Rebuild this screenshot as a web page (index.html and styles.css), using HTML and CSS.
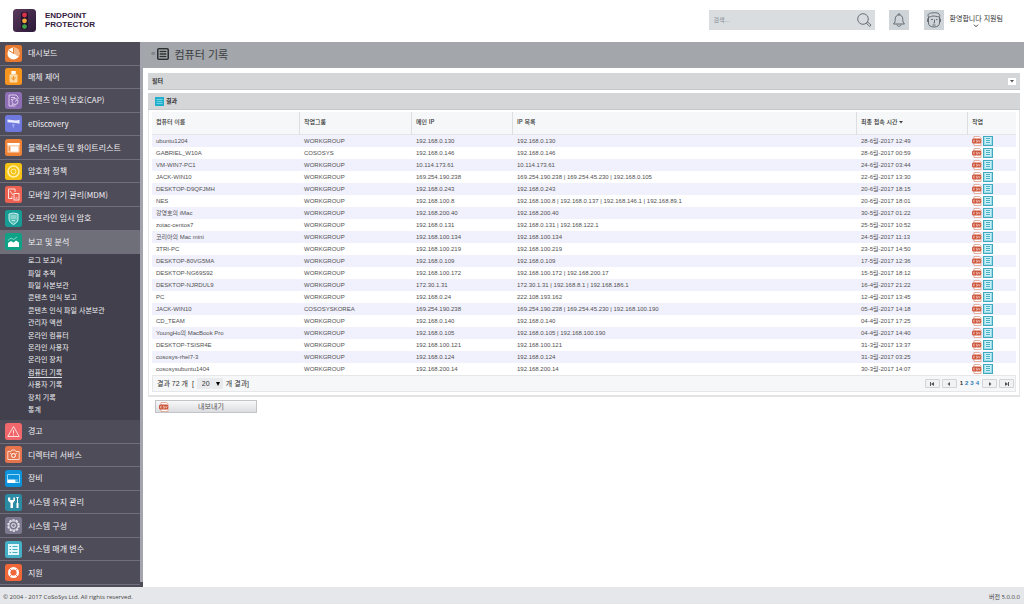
FILE: index.html
```html
<!DOCTYPE html>
<html lang="ko">
<head>
<meta charset="utf-8">
<title>Endpoint Protector</title>
<link rel="stylesheet" href="styles.css">
</head>
<body>
<svg class="sprite" aria-hidden="true">
  <symbol id="csv" viewBox="0 0 10 10"><path d="M2 .5h5.500l1.500 1.500v7.500H2z" fill="#fff" stroke="#e0a796" stroke-width=".9"/><rect x="0" y="2.600" width="9.200" height="4.800" rx="1.500" fill="#cb5136"/><path d="M3 4.200H1.400v1.700H3M5.600 4.200H4.300v.9h1.200v1H4M6.500 4l.8 2.200L8.200 4" fill="none" stroke="#f9dfd7" stroke-width=".6"/></symbol>
  <symbol id="list" viewBox="0 0 10 10"><rect x=".5" y=".5" width="9" height="9" fill="#c9eff5" stroke="#3fa9c0"/><path d="M3 2.500h4M3 4.500h4M3 6.500h4" stroke="#4cb3c9"/><path d="M1.500 1.500v7h7v-7" fill="none" stroke="#8fd6e3" stroke-width=".8"/></symbol>
</svg>
<header class="topbar">
  <a class="brand" href="#">
    <svg class="brand-mark" viewBox="0 0 23 23"><defs><linearGradient id="bm" x2="1" y2="1"><stop stop-color="#5a3a5c"/><stop offset="1" stop-color="#2b1838"/></linearGradient></defs><rect width="23" height="23" rx="3.500" fill="url(#bm)"/><rect x="8" y="3" width="7" height="17.500" rx="2" fill="#23132c"/><circle cx="11.500" cy="6" r="2.400" fill="#d8344a"/><circle cx="11.500" cy="11.800" r="2.400" fill="#f3a83c"/><circle cx="11.500" cy="17.600" r="2.400" fill="#3fa047"/></svg>
    <span>ENDPOINT<br>PROTECTOR</span>
  </a>
  <form class="search">
    <input type="text" placeholder="검색..." aria-label="검색">
    <button type="button" aria-label="찾기"><svg viewBox="0 0 16 16"><circle cx="7" cy="7" r="5.300"/><path d="M10.800 10.800l1-.6 3.200 2.800-1.200 1.500-3.200-2.900z"/></svg></button>
  </form>
  <button class="tile" type="button" aria-label="알림"><svg viewBox="0 0 20 20"><path d="M4.500 14c1.500-1.500 1.700-2.500 1.700-4.700 0-3 1.600-4.300 3.800-4.300s3.800 1.300 3.800 4.300c0 2.200.2 3.200 1.700 4.700zM9 4.900c0-1.700 2-1.700 2 0M8 14.500c.2 2.400 3.800 2.400 4 0"/></svg></button>
  <button class="tile" type="button" aria-label="프로필"><svg viewBox="0 0 20 20"><path d="M4.500 7c-1.500-3 1-3.800 3-4 3-.5 6-.5 7.500 1 1 1 .8 2 .5 3v6c0 2.500-2 4-5.500 4s-5.500-1.500-5.500-4zM5 7c2 0 2.500-1 4-1s4 .5 6 1M3.600 8.500v3.500M16.400 8.500v3.500M7 9.500h2M12 9.500h1.500M10.500 9.500v3.500H9.500M8.500 15h3"/></svg></button>
  <button class="user" type="button"><span>환영합니다 지원팀</span><svg viewBox="0 0 6 4"><path d="M1 .7l2 2 2-2"/></svg></button>
</header>
<div class="body">
  <nav class="side" aria-label="메뉴">
    <ul class="menu">
      <li class="item"><a href="#"><svg viewBox="0 0 17 17"><rect width="17" height="17" rx="2.500" fill="#e87a30"/><circle cx="8.500" cy="8.500" r="6" fill="#fff"/><path d="M8.500 8.500V2.500a6 6 0 0 1 5 9.300z" fill="#f4b98a"/><path d="M8.500 8.500L4 5.500M8.500 8.500V3" stroke="#e87a30" fill="none"/></svg>대시보드</a></li>
      <li class="item"><a href="#"><svg viewBox="0 0 17 17"><rect width="17" height="17" rx="2.500" fill="#f5941f"/><path d="M6.300 3h4.400v3.200H6.300z" fill="#fff"/><rect x="4.500" y="6.200" width="8" height="8.300" rx="1" fill="#fcd9a3"/><path d="M8.500 8v4.500M7 9.500v1.500l1.500.7L10 10.500V9" stroke="#f08a17" fill="none" stroke-width=".8"/></svg>매체 제어</a></li>
      <li class="item"><a href="#"><svg viewBox="0 0 17 17"><rect width="17" height="17" rx="2.500" fill="#8d6db4"/><g fill="none" stroke="#dccbec"><path d="M10.500 14H4V3h7l2 2v2"/><circle cx="10" cy="9.500" r="3"/><path d="M6 5.500h4M6 7.500h1.500M10 9.500l2-1.500M8 12l-1.500 2"/></g></svg>콘텐츠 인식 보호(CAP)</a></li>
      <li class="item"><a href="#"><svg viewBox="0 0 17 17"><rect width="17" height="17" rx="2.500" fill="#6f78dc"/><path d="M2.500 4.500l8.500 1 3.500-.8v4l-3.500-.6-8.500-.8z" fill="#e8ebff"/><path d="M7 9l1.200 5L10 9z" fill="#9aa3f0"/></svg>eDiscovery</a></li>
      <li class="item"><a href="#"><svg viewBox="0 0 17 17"><rect width="17" height="17" rx="2.500" fill="#ee8337"/><rect x="2.500" y="4" width="12" height="9.500" fill="#fbd3b3"/><path d="M2.500 4h12v2h-12z" fill="#fff"/><path d="M6 7.500h7v5H6z" fill="#fff"/><path d="M4.300 7.500v4.800" stroke="#ee8337"/></svg>블랙리스트 및 화이트리스트</a></li>
      <li class="item"><a href="#"><svg viewBox="0 0 17 17"><rect width="17" height="17" rx="2.500" fill="#f5c216"/><g fill="none" stroke="#fff0ae"><circle cx="8.500" cy="8.500" r="5.500" stroke-width="1.500"/><circle cx="8.500" cy="8.500" r="2.400"/></g></svg>암호화 정책</a></li>
      <li class="item"><a href="#"><svg viewBox="0 0 17 17"><rect width="17" height="17" rx="2.500" fill="#ec6152"/><g fill="none" stroke="#ffe0db"><path d="M7.500 12.500H3.500V3h6.500v3"/><rect x="9" y="7.500" width="5" height="6.500"/><path d="M5 5l3 4M6 11h1.500M10.500 12h2"/></g></svg>모바일 기기 관리(MDM)</a></li>
      <li class="item"><a href="#"><svg viewBox="0 0 17 17"><rect width="17" height="17" rx="2.500" fill="#169c94"/><path d="M4 4l4.500-1L13 4v5c0 3-2.500 4.500-4.500 5.500C6.500 13.500 4 12 4 9z" fill="#55beb7" stroke="#d2f2ef"/><path d="M5.500 6h6M5.500 8h6M7 10.500h3" stroke="#d2f2ef" stroke-width=".8"/></svg>오프라인 임시 암호</a></li>
      <li class="item active"><a href="#"><svg viewBox="0 0 17 17"><rect width="17" height="17" rx="2.500" fill="#0fa287"/><path d="M3 14v-4l3-2 2.500 1.500L11 7.500l3 2V14z" fill="#fff"/><path d="M3 7.500l3-2.500 2.500 1.500L12 4" fill="none" stroke="#83d8c8"/></svg>보고 및 분석</a></li>
      <li class="sub">
        <ul>
          <li><a href="#">로그 보고서</a></li><li><a href="#">파일 추적</a></li><li><a href="#">파일 사본보관</a></li><li><a href="#">콘텐츠 인식 보고</a></li><li><a href="#">콘텐츠 인식 파일 사본보관</a></li><li><a href="#">관리자 액션</a></li><li><a href="#">온라인 컴퓨터</a></li><li><a href="#">온라인 사용자</a></li><li><a href="#">온라인 장치</a></li><li><a class="current" href="#">컴퓨터 기록</a></li><li><a href="#">사용자 기록</a></li><li><a href="#">장치 기록</a></li><li><a href="#">통계</a></li>
        </ul>
      </li>
      <li class="item"><a href="#"><svg viewBox="0 0 17 17"><rect width="17" height="17" rx="2.500" fill="#f0686c"/><path d="M8.500 3.500l5.700 10H2.800z" fill="none" stroke="#ffdcdc" stroke-linejoin="round"/><path d="M8.500 7v3.500M8.500 11.500v1" stroke="#ffdcdc"/></svg>경고</a></li>
      <li class="item"><a href="#"><svg viewBox="0 0 17 17"><rect width="17" height="17" rx="2.500" fill="#e5734c"/><path d="M2.800 13.500v-8h3l1-1.500h3l1 1.500h3.400v8z" fill="none" stroke="#fbd9cc"/><circle cx="8.500" cy="9.500" r="2" fill="none" stroke="#fff"/><path d="M5 7l2 1.500M12 7l-2 1.500" stroke="#fbd9cc"/></svg>디렉터리 서비스</a></li>
      <li class="item"><a href="#"><svg viewBox="0 0 17 17"><rect width="17" height="17" rx="2.500" fill="#0d93dc"/><path d="M2.500 4.500h12v8h-12z" fill="none" stroke="#9bd8f8"/><path d="M2.500 9.500h8v3.500h-8z" fill="#fff"/><path d="M11.500 10h1M11.500 12h1" stroke="#fff"/></svg>장비</a></li>
      <li class="item"><a href="#"><svg viewBox="0 0 17 17"><rect width="17" height="17" rx="2.500" fill="#2a8ba2"/><path d="M3 3.500v3L5.500 9v5h2.500V9l2-2.500v-3L8.300 3.500V6h-3V3.500z" fill="#fff"/><path d="M11.300 3.500h2.400M12.500 3v6" stroke="#fff"/><path d="M12.500 9v5" stroke="#fff" stroke-width="2"/></svg>시스템 유지 관리</a></li>
      <li class="item"><a href="#"><svg viewBox="0 0 17 17"><rect width="17" height="17" rx="2.500" fill="#7d7a90"/><g fill="none" stroke="#f2f1f7"><circle cx="8.500" cy="8.500" r="5.600" stroke-width="1.200" stroke-dasharray="2.200 1.320"/><circle cx="8.500" cy="8.500" r="4.700"/><circle cx="8.500" cy="8.500" r="1.900"/></g></svg>시스템 구성</a></li>
      <li class="item"><a href="#"><svg viewBox="0 0 17 17"><rect width="17" height="17" rx="2.500" fill="#45afc5"/><rect x="3" y="3" width="11" height="11" fill="#e3f7fa"/><path d="M4.500 5.500h1.500M4.500 8.500h1.500M4.500 11.500h1.500M7.500 5.500h5M7.500 8.500h5M7.500 11.500h5" stroke="#45afc5"/></svg>시스템 매개 변수</a></li>
      <li class="item"><a href="#"><svg viewBox="0 0 17 17"><rect width="17" height="17" rx="2.500" fill="#f0673a"/><circle cx="8.500" cy="8.500" r="4.300" fill="none" stroke="#fff" stroke-width="2.400"/><path d="M4.200 4.200l1.700 1.700M12.800 4.200l-1.700 1.700M4.200 12.800l1.700-1.700M12.800 12.800l-1.700-1.700" stroke="#f0673a"/></svg>지원</a></li>
    </ul>
    <div class="track"></div>
  </nav>
  <main class="content">
    <div class="heading">
      <span class="back">«</span>
      <svg viewBox="0 0 12 12"><rect x=".8" y=".8" width="10.400" height="10.400" rx="1" fill="#b5b7b9" stroke="#2d3033" stroke-width="1.600"/><path d="M2.500 3.500h7M2.500 6h7M2.500 8.500h7" stroke="#2d3033" stroke-width="1.400"/></svg>
      <h1>컴퓨터 기록</h1>
    </div>
    <div class="panels">
      <section class="bar filter"><h2>필터</h2><button type="button" aria-label="필터 열기"><svg viewBox="0 0 6 6"><path d="M1 2h4L3 4.500z"/></svg></button></section>
      <section class="results">
        <div class="bar"><svg viewBox="0 0 9 9"><rect width="9" height="9" fill="#20aecb"/><path d="M1.500 2.500h6M1.500 4.500h6M1.500 6.500h6" stroke="#6fd3e6"/></svg><h2>결과</h2></div>
        <div class="frame">
          <table>
            <colgroup><col class="c-name"><col class="c-group"><col class="c-main"><col><col class="c-date"><col class="c-act"></colgroup>
            <thead><tr><th>컴퓨터 이름</th><th>작업그룹</th><th>메인 IP</th><th>IP 목록</th><th>최종 접속 시간 <svg viewBox="0 0 4 3"><path d="M0 0h4L2 2.500z"/></svg></th><th>작업</th></tr></thead>
            <tbody>
              <tr><td>ubuntu1204</td><td>WORKGROUP</td><td>192.168.0.130</td><td>192.168.0.130</td><td>28-6월-2017 12:49</td><td><svg><use href="#csv"/></svg><svg><use href="#list"/></svg></td></tr>
              <tr><td>GABRIEL_W10A</td><td>COSOSYS</td><td>192.168.0.146</td><td>192.168.0.146</td><td>28-6월-2017 00:59</td><td><svg><use href="#csv"/></svg><svg><use href="#list"/></svg></td></tr>
              <tr><td>VM-WIN7-PC1</td><td>WORKGROUP</td><td>10.114.173.61</td><td>10.114.173.61</td><td>24-6월-2017 03:44</td><td><svg><use href="#csv"/></svg><svg><use href="#list"/></svg></td></tr>
              <tr><td>JACK-WIN10</td><td>WORKGROUP</td><td>169.254.190.238</td><td>169.254.190.238 | 169.254.45.230 | 192.168.0.105</td><td>22-6월-2017 13:30</td><td><svg><use href="#csv"/></svg><svg><use href="#list"/></svg></td></tr>
              <tr><td>DESKTOP-D9QFJMH</td><td>WORKGROUP</td><td>192.168.0.243</td><td>192.168.0.243</td><td>20-6월-2017 18:15</td><td><svg><use href="#csv"/></svg><svg><use href="#list"/></svg></td></tr>
              <tr><td>NES</td><td>WORKGROUP</td><td>192.168.100.8</td><td>192.168.100.8 | 192.168.0.137 | 192.168.146.1 | 192.168.89.1</td><td>20-6월-2017 18:01</td><td><svg><use href="#csv"/></svg><svg><use href="#list"/></svg></td></tr>
              <tr><td>강영호의 iMac</td><td>WORKGROUP</td><td>192.168.200.40</td><td>192.168.200.40</td><td>30-5월-2017 01:22</td><td><svg><use href="#csv"/></svg><svg><use href="#list"/></svg></td></tr>
              <tr><td>zotac-centos7</td><td>WORKGROUP</td><td>192.168.0.131</td><td>192.168.0.131 | 192.168.122.1</td><td>25-5월-2017 10:52</td><td><svg><use href="#csv"/></svg><svg><use href="#list"/></svg></td></tr>
              <tr><td>코리아의 Mac mini</td><td>WORKGROUP</td><td>192.168.100.134</td><td>192.168.100.134</td><td>24-5월-2017 11:13</td><td><svg><use href="#csv"/></svg><svg><use href="#list"/></svg></td></tr>
              <tr><td>3TRI-PC</td><td>WORKGROUP</td><td>192.168.100.219</td><td>192.168.100.219</td><td>23-5월-2017 14:50</td><td><svg><use href="#csv"/></svg><svg><use href="#list"/></svg></td></tr>
              <tr><td>DESKTOP-80VG5MA</td><td>WORKGROUP</td><td>192.168.0.109</td><td>192.168.0.109</td><td>17-5월-2017 12:36</td><td><svg><use href="#csv"/></svg><svg><use href="#list"/></svg></td></tr>
              <tr><td>DESKTOP-NG69S92</td><td>WORKGROUP</td><td>192.168.100.172</td><td>192.168.100.172 | 192.168.200.17</td><td>15-5월-2017 18:12</td><td><svg><use href="#csv"/></svg><svg><use href="#list"/></svg></td></tr>
              <tr><td>DESKTOP-NJRDUL9</td><td>WORKGROUP</td><td>172.30.1.31</td><td>172.30.1.31 | 192.168.8.1 | 192.168.186.1</td><td>16-4월-2017 21:22</td><td><svg><use href="#csv"/></svg><svg><use href="#list"/></svg></td></tr>
              <tr><td>PC</td><td>WORKGROUP</td><td>192.168.0.24</td><td>222.108.193.162</td><td>12-4월-2017 13:45</td><td><svg><use href="#csv"/></svg><svg><use href="#list"/></svg></td></tr>
              <tr><td>JACK-WIN10</td><td>COSOSYSKOREA</td><td>169.254.190.238</td><td>169.254.190.238 | 169.254.45.230 | 192.168.100.190</td><td>05-4월-2017 14:18</td><td><svg><use href="#csv"/></svg><svg><use href="#list"/></svg></td></tr>
              <tr><td>CD_TEAM</td><td>WORKGROUP</td><td>192.168.0.140</td><td>192.168.0.140</td><td>04-4월-2017 17:25</td><td><svg><use href="#csv"/></svg><svg><use href="#list"/></svg></td></tr>
              <tr><td>YoungHo의 MacBook Pro</td><td>WORKGROUP</td><td>192.168.0.105</td><td>192.168.0.105 | 192.168.100.190</td><td>04-4월-2017 14:40</td><td><svg><use href="#csv"/></svg><svg><use href="#list"/></svg></td></tr>
              <tr><td>DESKTOP-TSISR4E</td><td>WORKGROUP</td><td>192.168.100.121</td><td>192.168.100.121</td><td>31-3월-2017 13:37</td><td><svg><use href="#csv"/></svg><svg><use href="#list"/></svg></td></tr>
              <tr><td>cososys-rhel7-3</td><td>WORKGROUP</td><td>192.168.0.124</td><td>192.168.0.124</td><td>31-3월-2017 03:25</td><td><svg><use href="#csv"/></svg><svg><use href="#list"/></svg></td></tr>
              <tr><td>cososysubuntu1404</td><td>WORKGROUP</td><td>192.168.200.14</td><td>192.168.200.14</td><td>30-3월-2017 14:07</td><td><svg><use href="#csv"/></svg><svg><use href="#list"/></svg></td></tr>
            </tbody>
          </table>
          <div class="pager">
            <label for="size">결과 72 개&nbsp; [</label>
            <span class="pick"><select id="size"><option>20</option></select><svg viewBox="0 0 4 4"><path d="M0 0h4L2 4z"/></svg></span>
            <span>개 결과]</span>
            <div class="pages">
              <button type="button" aria-label="처음"><svg viewBox="0 0 6 4"><path d="M1 0h1v4H1zM5 0v4L2 2z"/></svg></button>
              <button type="button" aria-label="이전"><svg viewBox="0 0 6 4"><path d="M4 0v4L1.500 2z"/></svg></button>
              <span class="nums"><span>1</span><a href="#">2</a><a href="#">3</a><a href="#">4</a></span>
              <button type="button" aria-label="다음"><svg viewBox="0 0 6 4"><path d="M2 0v4l2.500-2z"/></svg></button>
              <button type="button" aria-label="마지막"><svg viewBox="0 0 6 4"><path d="M4 0h1v4H4zM1 0v4l3-2z"/></svg></button>
            </div>
          </div>
        </div>
      </section>
      <button class="export" type="button"><svg><use href="#csv"/></svg><span>내보내기</span></button>
    </div>
  </main>
</div>
<footer class="foot"><span>© 2004 - 2017 CoSoSys Ltd. All rights reserved.</span><span>버전 5.0.0.0</span></footer>
</body>
</html>
```
FILE: styles.css
```css
* { box-sizing: border-box; }
body { margin: 0; min-height: 100vh; display: flex; flex-direction: column; background: #fff; color: #333; font: 6px/12px "Liberation Sans", "Noto Sans CJK KR", sans-serif; }
ul { list-style: none; margin: 0; padding: 0; }
h1, h2 { margin: 0; }
a { color: inherit; text-decoration: none; }
svg { display: block; flex: none; }
button, input, select { font: inherit; color: inherit; border: 0; margin: 0; padding: 0; background: none; border-radius: 0; }
.sprite { width: 0; height: 0; position: absolute; }

.topbar { height: 42px; display: flex; align-items: center; padding: 0 21px 2px 13px; }
.brand { display: flex; align-items: center; gap: 9px; margin-right: auto; color: #33203f; font-size: 8px; line-height: 9px; font-weight: bold; }
.brand-mark { width: 23px; height: 23px; }
.search { display: flex; align-items: center; width: 166px; height: 20px; padding: 0 3px 0 5px; background: #d9dde0; margin-right: 14px; }
.search input { flex: 1; min-width: 0; height: 20px; outline: 0; }
.search input::placeholder { color: #858a90; opacity: 1; }
.search svg { width: 16px; height: 16px; fill: none; stroke: #6c7178; stroke-width: 1; }
.tile { width: 20px; height: 20px; background: #ced4d8; margin-right: 15px; }
.tile svg { width: 20px; height: 20px; fill: none; stroke: #656c74; stroke-width: 1; }
.tile + .tile { margin-right: 6px; }
.user { display: flex; flex-direction: column; align-items: center; padding-top: 2px; font: 7px/9px "Noto Sans CJK KR", sans-serif; color: #333; }
.user svg { width: 6px; height: 4px; margin-top: 1px; fill: none; stroke: #444; }

.body { flex: 1; display: flex; }
.side { flex: none; width: 143px; display: flex; background: #4e4c59; color: #f0f0f3; }
.menu { flex: 1; display: flex; flex-direction: column; padding-bottom: 2px; }
.item { flex: 1; min-height: 23px; border-bottom: 1px solid #6f6e7a; font: 8px/12px "Noto Sans CJK KR", "Open Sans", sans-serif; }
.item a { display: flex; align-items: center; gap: 6px; height: 100%; padding-left: 5px; }
.item svg { width: 17px; height: 17px; }
.active { background: #6f6f79; }
.sub { height: 166px; padding: 1px 0 4px; background: #42404c; }
.sub ul { height: 100%; display: flex; flex-direction: column; padding-left: 28px; }
.sub li { flex: 1; display: flex; align-items: center; }
.sub a { font: 7px/9px "Noto Sans CJK KR", sans-serif; border-bottom: 1px solid transparent; }
.sub .current { border-color: #e0e0e4; }
.track { width: 3px; margin-bottom: 5px; background: #a3a4ad; }

.content { flex: 1; min-width: 0; }
.heading { height: 26px; display: flex; align-items: center; padding: 0 8px 2px; background: #a3a6aa; color: #3b3e42; }
.heading svg { width: 12px; height: 12px; margin: 0 5px 0 2px; }
.back { font-size: 8px; color: #62656a; }
.heading h1 { font: 11px/14px "Noto Sans CJK KR", sans-serif; }
.panels { padding: 5px 4px 0 5px; }
.bar { display: flex; align-items: center; height: 17px; background: #d4d6d8; border-bottom: 1px solid #c6c9cb; }
.bar h2 { font: bold 6px/12px "Noto Sans CJK KR", sans-serif; color: #333; }
.filter { justify-content: space-between; padding: 0 4px; margin-bottom: 3px; }
.filter button { width: 8px; height: 7px; padding: 0 1px; background: #fff; }
.filter svg { width: 6px; height: 6px; fill: #555; }
.results .bar { padding-left: 7px; gap: 2px; }
.results .bar svg { width: 9px; height: 9px; }
.frame { padding: 2px 3px 3px; border: 1px solid #e3e4e6; border-width: 0 1px 2px; }
table { width: 100%; table-layout: fixed; border-collapse: separate; border-spacing: 0; }
.c-name { width: 148px; }
.c-group { width: 112px; }
.c-main { width: 101px; }
.c-date { width: 111px; }
.c-act { width: 48px; }
th { height: 23px; padding: 0 4px 2px; text-align: left; font: 500 6px/12px "Noto Sans CJK KR", sans-serif; color: #333; background: #f6f7f8; border-right: 1px solid #dcdee0; border-bottom: 1px solid #e2e4e6; }
th:last-child { border-right: 0; }
th svg { display: inline-block; width: 4px; height: 3px; fill: #444; }
td { height: 12px; padding: 0 4px; line-height: 11px; white-space: nowrap; color: #505050; }
tbody tr:nth-child(odd) { background: #f1f0fd; }
td svg { display: inline-block; width: 10px; height: 10px; vertical-align: middle; margin-right: 1px; }
.pager { display: flex; align-items: center; height: 17px; padding: 0 1px 0 4px; gap: 3px; background: #f6f7f8; border: 1px solid #e6e7e9; font-size: 7px; }
.pick { display: flex; align-items: center; width: 26px; height: 11px; padding: 0 3px 0 5px; background: #e9eaed; }
.pick select { flex: 1; min-width: 0; appearance: none; font-size: 7px; outline: 0; }
.pick svg { width: 4px; height: 4px; }
.pages { display: flex; align-items: center; gap: 2px; margin-left: auto; }
.pages button { display: flex; align-items: center; justify-content: center; width: 15px; height: 9px; border: 1px solid #d2d3d6; border-radius: 1px; background: #f1f2f3; }
.pages svg { width: 6px; height: 4px; fill: #555; }
.nums { display: flex; gap: 2px; padding: 0 1px; font: bold 6px/9px "Liberation Sans", sans-serif; }
.nums a { color: #2b7cb8; }
.export { display: flex; align-items: center; width: 102px; height: 13px; margin: 3px 0 0 7px; padding: 0 3px; border: 1px solid #c3c4c7; background: linear-gradient(#f8f8f9, #dcdde0); color: #555; }
.export svg { width: 10px; height: 10px; }
.export span { flex: 1; text-align: center; font-size: 7px; }

.foot { display: flex; justify-content: space-between; align-items: center; height: 17px; padding: 2px 4px 0 3px; background: #e6e7ea; color: #444; font: 6px/12px "Open Sans", "Noto Sans CJK KR", sans-serif; }
```
